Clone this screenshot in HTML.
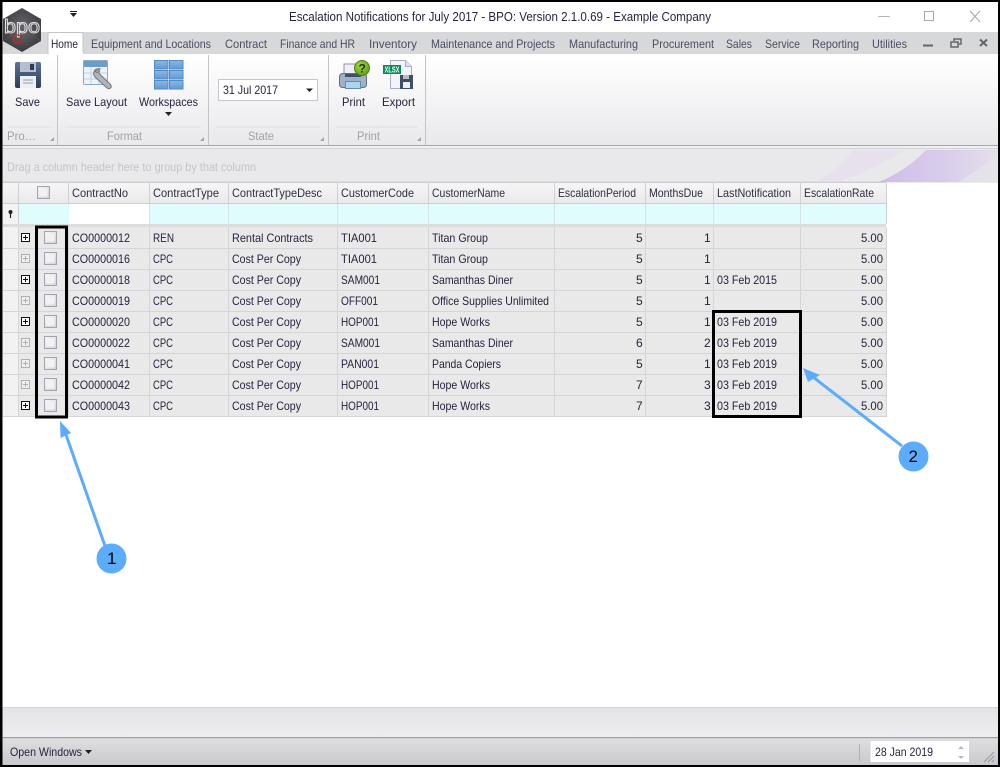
<!DOCTYPE html>
<html><head><meta charset="utf-8"><title>Escalation Notifications</title>
<style>
html,body{margin:0;padding:0;background:#fff;width:1000px;height:767px;overflow:hidden}
svg{display:block}
text{font-family:"Liberation Sans",Arial,sans-serif;font-size:12px;fill:#24243e}
.t{fill:#4a4e62}.g{fill:#a0a0a6}.h{fill:#2e2e42}
</style></head><body>
<svg width="1000" height="767" viewBox="0 0 1000 767" xmlns="http://www.w3.org/2000/svg">
<defs>
<linearGradient id="rib" x1="0" y1="0" x2="0" y2="1"><stop offset="0" stop-color="#fff"/><stop offset="1" stop-color="#e9e9ec"/></linearGradient>
<linearGradient id="hd" x1="0" y1="0" x2="0" y2="1"><stop offset="0" stop-color="#f6f6f6"/><stop offset="1" stop-color="#e9e9e9"/></linearGradient>
<linearGradient id="st" x1="0" y1="0" x2="0" y2="1"><stop offset="0" stop-color="#dedee0"/><stop offset="1" stop-color="#c9c9cd"/></linearGradient>
<linearGradient id="bb" x1="0" y1="0" x2="0" y2="1"><stop offset="0" stop-color="#e4e4e6"/><stop offset="1" stop-color="#ededf0"/></linearGradient>
<linearGradient id="pur" x1="0" y1="0" x2="1" y2="0"><stop offset="0" stop-color="#cbb8e6"/><stop offset=".6" stop-color="#d8cbec"/><stop offset="1" stop-color="#e4e0ea"/></linearGradient>
<linearGradient id="cb" x1="0" y1="0" x2="1" y2="1"><stop offset="0" stop-color="#f8f8f8"/><stop offset="1" stop-color="#d0d0d6"/></linearGradient>
<linearGradient id="flop" x1="0" y1="0" x2="0" y2="1"><stop offset="0" stop-color="#5a7296"/><stop offset="1" stop-color="#2f3e58"/></linearGradient>
<radialGradient id="logo" cx=".5" cy=".45" r=".6"><stop offset="0" stop-color="#6a6a6e"/><stop offset="1" stop-color="#38383c"/></radialGradient>
<linearGradient id="wk" x1="0" y1="0" x2="0" y2="1"><stop offset="0" stop-color="#8db8e0"/><stop offset="1" stop-color="#5f9ad2"/></linearGradient>
<radialGradient id="q" cx=".4" cy=".35" r=".7"><stop offset="0" stop-color="#a6dc3c"/><stop offset="1" stop-color="#5f9a1a"/></radialGradient>
<g id="chk"><rect x="0.5" y="0.5" width="12" height="12" fill="url(#cb)" stroke="#a4a4b0"/><rect x="2.5" y="2.5" width="8" height="8" fill="#f2f2f2" stroke="none"/></g>
<g id="pd"><rect x="0.5" y="0.5" width="8" height="8" fill="#fff" stroke="#111"/><path d="M2 4.500h5M4.500 2v5" stroke="#111"/></g>
<g id="pf"><rect x="0.5" y="0.5" width="8" height="8" fill="#f0f0f0" stroke="#b0b0b0"/><path d="M2 4.500h5M4.500 2v5" stroke="#b0b0b0"/></g>
</defs>

<!-- title bar -->
<rect width="1000" height="767" fill="#fff"/>
<path d="M70 13h7l-3.500 4zM70 11h7v1h-7z" fill="#222"/>
<text x="289" y="21" textLength="422" lengthAdjust="spacingAndGlyphs" style="font-size:12.500px">Escalation Notifications for July 2017 - BPO: Version 2.1.0.69 - Example Company</text>
<path d="M878 16.500h12" stroke="#b5b5b5"/>
<rect x="924.500" y="11.500" width="9" height="9" fill="none" stroke="#a8a8a8"/>
<path d="M970 11l10 11M980 11l-10 11" stroke="#a8a8a8"/>

<!-- tabs -->
<rect x="0" y="32" width="1000" height="22" fill="#d7d8da"/>
<path d="M48 54V34q0-1.500 1.500-1.500h32q1.500 0 1.500 1.500v20z" fill="#fff" stroke="#c4c4c8"/>
<rect x="49" y="52" width="34" height="3" fill="#fff"/>
<text x="51" y="48" textLength="27" lengthAdjust="spacingAndGlyphs">Home</text>
<text class="t" x="91" y="48" textLength="120" lengthAdjust="spacingAndGlyphs">Equipment and Locations</text>
<text class="t" x="225" y="48" textLength="42" lengthAdjust="spacingAndGlyphs">Contract</text>
<text class="t" x="280" y="48" textLength="75" lengthAdjust="spacingAndGlyphs">Finance and HR</text>
<text class="t" x="369" y="48" textLength="48" lengthAdjust="spacingAndGlyphs">Inventory</text>
<text class="t" x="431" y="48" textLength="124" lengthAdjust="spacingAndGlyphs">Maintenance and Projects</text>
<text class="t" x="569" y="48" textLength="69" lengthAdjust="spacingAndGlyphs">Manufacturing</text>
<text class="t" x="652" y="48" textLength="62" lengthAdjust="spacingAndGlyphs">Procurement</text>
<text class="t" x="726" y="48" textLength="26" lengthAdjust="spacingAndGlyphs">Sales</text>
<text class="t" x="765" y="48" textLength="35" lengthAdjust="spacingAndGlyphs">Service</text>
<text class="t" x="812" y="48" textLength="47" lengthAdjust="spacingAndGlyphs">Reporting</text>
<text class="t" x="872" y="48" textLength="35" lengthAdjust="spacingAndGlyphs">Utilities</text>
<path d="M923 45.500h10" stroke="#666" stroke-width="2"/>
<path d="M954 41v-2h7v5h-2M951 42h7v5h-7z" fill="none" stroke="#666" stroke-width="1.500"/>
<path d="M980 39.500l7 6.500M987 39.500l-7 6.500" stroke="#666" stroke-width="2"/>

<!-- ribbon -->
<rect x="0" y="54" width="1000" height="92" fill="url(#rib)"/>
<rect x="0" y="145" width="1000" height="1" fill="#a6a6a8"/>
<rect x="0" y="146" width="1000" height="3" fill="#f0f0f2"/>
<rect x="0" y="148.500" width="1000" height="1" fill="#b8b8ba"/>
<path d="M57.500 55v90M208.500 55v90M328.500 55v90M425.500 55v90" stroke="#c4c4c8"/>
<path d="M8 127h44M65 127h136M216 127h104M336 127h82" stroke="#e0e0e2"/>

<!-- save icon -->
<rect x="15" y="62" width="26" height="26" rx="2" fill="url(#flop)"/>
<rect x="20" y="62" width="16" height="10" fill="#b6bfce"/><rect x="30" y="64" width="4" height="6" fill="#2d3c56"/>
<rect x="20" y="76" width="16" height="12" fill="#eef0f4"/><path d="M23 80h10M23 83h10" stroke="#8a97ad"/>
<text x="15" y="106" textLength="25" lengthAdjust="spacingAndGlyphs">Save</text>
<text class="g" x="7" y="140" textLength="29" lengthAdjust="spacingAndGlyphs">Pro…</text>
<path d="M54 137v4h-4z" fill="#a4a4a8"/>

<!-- save layout icon -->
<rect x="83.500" y="60.500" width="24" height="24" rx="1" fill="#eef3f8" stroke="#8aa8c8"/>
<rect x="84" y="61" width="23" height="6" fill="#6d9cc8"/>
<path d="M84 73h23M84 79h23M91 67v17M99 67v17" stroke="#bfd0e0"/>
<path d="M100 69q-5-1-6 3-1 3 1 5l12 11q2 1.500 3.500 0t0-3.500l-11.500-11q0-2 1-3l-3 2-2-1z" fill="#b0b5bc" stroke="#70767e" stroke-width="1"/>
<text x="66" y="106" textLength="61" lengthAdjust="spacingAndGlyphs">Save Layout</text>

<!-- workspaces icon -->
<g fill="url(#wk)" stroke="#4f8cc6">
<rect x="154.500" y="60.500" width="13.500" height="8.500"/><rect x="169.500" y="60.500" width="13.500" height="8.500"/>
<rect x="154.500" y="70.500" width="13.500" height="8.500"/><rect x="169.500" y="70.500" width="13.500" height="8.500"/>
<rect x="154.500" y="80.500" width="13.500" height="8.500"/><rect x="169.500" y="80.500" width="13.500" height="8.500"/>
</g>
<text x="139" y="106" textLength="59" lengthAdjust="spacingAndGlyphs">Workspaces</text>
<path d="M165 112h7l-3.500 4z" fill="#222"/>
<text class="g" x="107" y="140" textLength="35" lengthAdjust="spacingAndGlyphs">Format</text>
<path d="M204 137v4h-4z" fill="#a4a4a8"/>

<!-- date dropdown -->
<rect x="218.500" y="79.500" width="99" height="21" fill="#fff" stroke="#c6c6ca"/>
<text x="223" y="94" textLength="55" lengthAdjust="spacingAndGlyphs">31 Jul 2017</text>
<path d="M306 88.500h7l-3.500 3.500z" fill="#222"/>
<text class="g" x="248" y="140" textLength="26" lengthAdjust="spacingAndGlyphs">State</text>
<path d="M324 137v4h-4z" fill="#a4a4a8"/>

<!-- print icon -->
<rect x="344" y="64" width="18" height="12" fill="#eef0f4" stroke="#8d96a3"/>
<rect x="339.500" y="73.500" width="27" height="14" rx="3" fill="#9fb1c6" stroke="#5f7288"/>
<rect x="345" y="74" width="16" height="3" fill="#3f5068"/>
<rect x="345.500" y="81.500" width="15" height="7" fill="#a8d6f4" stroke="#6d8aa5"/>
<circle cx="362" cy="68" r="7.500" fill="url(#q)" stroke="#527a14"/>
<text x="358.500" y="72.500" style="font-size:12px;font-weight:bold;fill:#1f3306">?</text>
<text x="342" y="106" textLength="23" lengthAdjust="spacingAndGlyphs">Print</text>
<text class="g" x="357" y="140" textLength="23" lengthAdjust="spacingAndGlyphs">Print</text>

<!-- export icon -->
<path d="M390.500 60.500h15l6 6v22h-21z" fill="#f2f4f8" stroke="#a7b0be"/>
<path d="M405.500 60.500v6h6" fill="#dfe4ec" stroke="#a7b0be"/>
<rect x="383" y="65" width="18" height="9" fill="#0a8a5a"/>
<text x="384.500" y="72.500" textLength="15" lengthAdjust="spacingAndGlyphs" style="font-size:8px;font-weight:bold;fill:#fff">XLSX</text>
<rect x="400" y="75" width="13" height="14" fill="#3f4f66"/><rect x="403" y="82" width="7" height="6" fill="#eef0f4"/><rect x="403" y="75" width="6" height="4" fill="#b7bfcb"/>
<text x="382" y="106" textLength="33" lengthAdjust="spacingAndGlyphs">Export</text>
<path d="M421 137v4h-4z" fill="#a4a4a8"/>

<!-- group panel -->
<rect x="0" y="149" width="1000" height="33" fill="#e9e9ec"/>
<rect x="0" y="181.500" width="1000" height="1" fill="#d4d4d6"/>
<text x="7" y="171" textLength="249" lengthAdjust="spacingAndGlyphs" style="fill:#c4c5c9">Drag a column header here to group by that column</text>
<path d="M835 182Q875 170 905 150H853Q845 165 815 182z" fill="#e6dcee" opacity=".75"/>
<path d="M878 182Q905 172 926 150H998V182z" fill="url(#pur)" opacity=".9"/>
<path d="M958 182Q975 172 998 155V182z" fill="#e6e4ea" opacity=".8"/>

<!-- grid header -->
<rect x="3" y="183" width="883" height="21" fill="url(#hd)"/>
<path d="M3 182.500h883M3 203.500h883" stroke="#cfcfd2"/>
<g stroke="#d0d0d3"><path d="M18.500 183v41M68.500 183v41M149.500 183v41M228.500 183v41M337.500 183v41M428.500 183v41M554.500 183v41M645.500 183v41M713.500 183v41M800.500 183v41M886.500 183v41"/></g>
<use href="#chk" x="37" y="186"/>
<text class="h" x="72" y="197" textLength="56" lengthAdjust="spacingAndGlyphs">ContractNo</text>
<text class="h" x="153" y="197" textLength="66" lengthAdjust="spacingAndGlyphs">ContractType</text>
<text class="h" x="232" y="197" textLength="90" lengthAdjust="spacingAndGlyphs">ContractTypeDesc</text>
<text class="h" x="341" y="197" textLength="73" lengthAdjust="spacingAndGlyphs">CustomerCode</text>
<text class="h" x="432" y="197" textLength="73" lengthAdjust="spacingAndGlyphs">CustomerName</text>
<text class="h" x="558" y="197" textLength="78" lengthAdjust="spacingAndGlyphs">EscalationPeriod</text>
<text class="h" x="649" y="197" textLength="54" lengthAdjust="spacingAndGlyphs">MonthsDue</text>
<text class="h" x="717" y="197" textLength="74" lengthAdjust="spacingAndGlyphs">LastNotification</text>
<text class="h" x="804" y="197" textLength="70" lengthAdjust="spacingAndGlyphs">EscalationRate</text>

<!-- filter row -->
<rect x="3" y="204" width="15" height="20" fill="#f3f3f3"/>
<rect x="19" y="204" width="867" height="20" fill="#dffdfd"/>
<rect x="69" y="204" width="80" height="20" fill="#fff"/>
<g stroke="#d6e4e6"><path d="M149.500 204v20M228.500 204v20M337.500 204v20M428.500 204v20M554.500 204v20M645.500 204v20M713.500 204v20M800.500 204v20"/></g>
<circle cx="10.500" cy="212" r="2" fill="#222"/><path d="M10.500 213v5" stroke="#222" stroke-width="1.200"/>
<rect x="3" y="224" width="883" height="3" fill="#dcdcdc"/>

<!-- rows background -->
<rect x="3" y="227" width="15" height="190" fill="#f2f2f2"/>
<rect x="19" y="227" width="867" height="190" fill="#e9e9e9"/>
<g stroke="#d5d5d7">
<path d="M3 248.500h883M3 269.500h883M3 290.500h883M3 311.500h883M3 332.500h883M3 353.500h883M3 374.500h883M3 395.500h883M3 416.500h883"/>
<path d="M18.500 227v190M68.500 227v190M149.500 227v190M228.500 227v190M337.500 227v190M428.500 227v190M554.500 227v190M645.500 227v190M713.500 227v190M800.500 227v190M886.500 227v190"/>
</g>

<use href="#pd" x="21" y="233"/><use href="#pf" x="21" y="254"/><use href="#pd" x="21" y="275"/><use href="#pf" x="21" y="296"/><use href="#pd" x="21" y="317"/><use href="#pf" x="21" y="338"/><use href="#pf" x="21" y="359"/><use href="#pf" x="21" y="380"/><use href="#pd" x="21" y="401"/>
<use href="#chk" x="44" y="231"/><use href="#chk" x="44" y="252"/><use href="#chk" x="44" y="273"/><use href="#chk" x="44" y="294"/><use href="#chk" x="44" y="315"/><use href="#chk" x="44" y="336"/><use href="#chk" x="44" y="357"/><use href="#chk" x="44" y="378"/><use href="#chk" x="44" y="399"/>

<!-- row 1 -->
<text x="72" y="242" textLength="58" lengthAdjust="spacingAndGlyphs">CO0000012</text><text x="153" y="242" textLength="21" lengthAdjust="spacingAndGlyphs">REN</text><text x="232" y="242" textLength="81" lengthAdjust="spacingAndGlyphs">Rental Contracts</text><text x="341" y="242" textLength="36" lengthAdjust="spacingAndGlyphs">TIA001</text><text x="432" y="242" textLength="56" lengthAdjust="spacingAndGlyphs">Titan Group</text><text x="636" y="242">5</text><text x="704" y="242">1</text><text x="861" y="242" textLength="22" lengthAdjust="spacingAndGlyphs">5.00</text>
<!-- row 2 -->
<text x="72" y="263" textLength="58" lengthAdjust="spacingAndGlyphs">CO0000016</text><text x="153" y="263" textLength="20" lengthAdjust="spacingAndGlyphs">CPC</text><text x="232" y="263" textLength="69" lengthAdjust="spacingAndGlyphs">Cost Per Copy</text><text x="341" y="263" textLength="36" lengthAdjust="spacingAndGlyphs">TIA001</text><text x="432" y="263" textLength="56" lengthAdjust="spacingAndGlyphs">Titan Group</text><text x="636" y="263">5</text><text x="704" y="263">1</text><text x="861" y="263" textLength="22" lengthAdjust="spacingAndGlyphs">5.00</text>
<!-- row 3 -->
<text x="72" y="284" textLength="58" lengthAdjust="spacingAndGlyphs">CO0000018</text><text x="153" y="284" textLength="20" lengthAdjust="spacingAndGlyphs">CPC</text><text x="232" y="284" textLength="69" lengthAdjust="spacingAndGlyphs">Cost Per Copy</text><text x="341" y="284" textLength="39" lengthAdjust="spacingAndGlyphs">SAM001</text><text x="432" y="284" textLength="81" lengthAdjust="spacingAndGlyphs">Samanthas Diner</text><text x="636" y="284">5</text><text x="704" y="284">1</text><text x="717" y="284" textLength="60" lengthAdjust="spacingAndGlyphs">03 Feb 2015</text><text x="861" y="284" textLength="22" lengthAdjust="spacingAndGlyphs">5.00</text>
<!-- row 4 -->
<text x="72" y="305" textLength="58" lengthAdjust="spacingAndGlyphs">CO0000019</text><text x="153" y="305" textLength="20" lengthAdjust="spacingAndGlyphs">CPC</text><text x="232" y="305" textLength="69" lengthAdjust="spacingAndGlyphs">Cost Per Copy</text><text x="341" y="305" textLength="37" lengthAdjust="spacingAndGlyphs">OFF001</text><text x="432" y="305" textLength="117" lengthAdjust="spacingAndGlyphs">Office Supplies Unlimited</text><text x="636" y="305">5</text><text x="704" y="305">1</text><text x="861" y="305" textLength="22" lengthAdjust="spacingAndGlyphs">5.00</text>
<!-- row 5 -->
<text x="72" y="326" textLength="58" lengthAdjust="spacingAndGlyphs">CO0000020</text><text x="153" y="326" textLength="20" lengthAdjust="spacingAndGlyphs">CPC</text><text x="232" y="326" textLength="69" lengthAdjust="spacingAndGlyphs">Cost Per Copy</text><text x="341" y="326" textLength="38" lengthAdjust="spacingAndGlyphs">HOP001</text><text x="432" y="326" textLength="58" lengthAdjust="spacingAndGlyphs">Hope Works</text><text x="636" y="326">5</text><text x="704" y="326">1</text><text x="717" y="326" textLength="60" lengthAdjust="spacingAndGlyphs">03 Feb 2019</text><text x="861" y="326" textLength="22" lengthAdjust="spacingAndGlyphs">5.00</text>
<!-- row 6 -->
<text x="72" y="347" textLength="58" lengthAdjust="spacingAndGlyphs">CO0000022</text><text x="153" y="347" textLength="20" lengthAdjust="spacingAndGlyphs">CPC</text><text x="232" y="347" textLength="69" lengthAdjust="spacingAndGlyphs">Cost Per Copy</text><text x="341" y="347" textLength="39" lengthAdjust="spacingAndGlyphs">SAM001</text><text x="432" y="347" textLength="81" lengthAdjust="spacingAndGlyphs">Samanthas Diner</text><text x="636" y="347">6</text><text x="704" y="347">2</text><text x="717" y="347" textLength="60" lengthAdjust="spacingAndGlyphs">03 Feb 2019</text><text x="861" y="347" textLength="22" lengthAdjust="spacingAndGlyphs">5.00</text>
<!-- row 7 -->
<text x="72" y="368" textLength="58" lengthAdjust="spacingAndGlyphs">CO0000041</text><text x="153" y="368" textLength="20" lengthAdjust="spacingAndGlyphs">CPC</text><text x="232" y="368" textLength="69" lengthAdjust="spacingAndGlyphs">Cost Per Copy</text><text x="341" y="368" textLength="38" lengthAdjust="spacingAndGlyphs">PAN001</text><text x="432" y="368" textLength="69" lengthAdjust="spacingAndGlyphs">Panda Copiers</text><text x="636" y="368">5</text><text x="704" y="368">1</text><text x="717" y="368" textLength="60" lengthAdjust="spacingAndGlyphs">03 Feb 2019</text><text x="861" y="368" textLength="22" lengthAdjust="spacingAndGlyphs">5.00</text>
<!-- row 8 -->
<text x="72" y="389" textLength="58" lengthAdjust="spacingAndGlyphs">CO0000042</text><text x="153" y="389" textLength="20" lengthAdjust="spacingAndGlyphs">CPC</text><text x="232" y="389" textLength="69" lengthAdjust="spacingAndGlyphs">Cost Per Copy</text><text x="341" y="389" textLength="38" lengthAdjust="spacingAndGlyphs">HOP001</text><text x="432" y="389" textLength="58" lengthAdjust="spacingAndGlyphs">Hope Works</text><text x="636" y="389">7</text><text x="704" y="389">3</text><text x="717" y="389" textLength="60" lengthAdjust="spacingAndGlyphs">03 Feb 2019</text><text x="861" y="389" textLength="22" lengthAdjust="spacingAndGlyphs">5.00</text>
<!-- row 9 -->
<text x="72" y="410" textLength="58" lengthAdjust="spacingAndGlyphs">CO0000043</text><text x="153" y="410" textLength="20" lengthAdjust="spacingAndGlyphs">CPC</text><text x="232" y="410" textLength="69" lengthAdjust="spacingAndGlyphs">Cost Per Copy</text><text x="341" y="410" textLength="38" lengthAdjust="spacingAndGlyphs">HOP001</text><text x="432" y="410" textLength="58" lengthAdjust="spacingAndGlyphs">Hope Works</text><text x="636" y="410">7</text><text x="704" y="410">3</text><text x="717" y="410" textLength="60" lengthAdjust="spacingAndGlyphs">03 Feb 2019</text><text x="861" y="410" textLength="22" lengthAdjust="spacingAndGlyphs">5.00</text>

<!-- annotations -->
<rect x="36.500" y="227" width="30" height="190" fill="none" stroke="#000" stroke-width="3"/>
<rect x="713.500" y="311.500" width="87" height="105" fill="none" stroke="#000" stroke-width="3"/>
<path d="M105 546L65 432" stroke="#5cacfb" stroke-width="3" fill="none"/>
<path d="M60 421L71 433L60.500 438z" fill="#5cacfb"/>
<circle cx="111.500" cy="558.500" r="15" fill="#5cacfb"/>
<text x="107" y="564" style="font-size:17px;fill:#000">1</text>
<path d="M902 446L813 377" stroke="#5cacfb" stroke-width="3" fill="none"/>
<path d="M803 368L820 375L808 382z" fill="#5cacfb"/>
<circle cx="913.500" cy="456.500" r="15" fill="#5cacfb"/>
<text x="908.500" y="462" style="font-size:17px;fill:#000">2</text>

<!-- bottom bars -->
<rect x="0" y="707" width="1000" height="1" fill="#d4d4d6"/>
<rect x="0" y="708" width="1000" height="29" fill="url(#bb)"/>
<rect x="0" y="737" width="1000" height="1.500" fill="#a0a0a2"/>
<rect x="0" y="739" width="1000" height="26" fill="url(#st)"/>
<text x="10" y="756" textLength="72" lengthAdjust="spacingAndGlyphs">Open Windows</text>
<path d="M85 750h7l-3.500 4z" fill="#222"/>
<path d="M859.500 744v17" stroke="#b0b0b4"/>
<rect x="870.500" y="741" width="98.500" height="21" fill="#fff"/>
<text x="875" y="756" textLength="58" lengthAdjust="spacingAndGlyphs">28 Jan 2019</text>
<path d="M958 749l3-3 3 3zM958 756l3 3 3-3z" fill="#b8b8bc"/>
<path d="M984 762l10-10M988 762l6-6M992 762l2-2" stroke="#9a9a9e"/>

<!-- logo -->
<path d="M22 8L41 19V41L22 52L3 41V19z" fill="url(#logo)"/>
<path d="M22 8V30M3 19L22 30L41 19M3 41L22 30L41 41" stroke="#58585c" stroke-width=".7" fill="none"/>
<text x="4" y="33" textLength="36" lengthAdjust="spacingAndGlyphs" style="font-size:19px;fill:none;stroke:#e4e4e4;stroke-width:.9">bpo</text>
<circle cx="17.500" cy="39" r="4" fill="none" stroke="#d42020" stroke-width="1.300"/>

<!-- outer window border -->
<path d="M0 0H1000V767H0z M2.500 2V765H998V2z" fill="#000" fill-rule="evenodd"/>
</svg>
</body></html>
